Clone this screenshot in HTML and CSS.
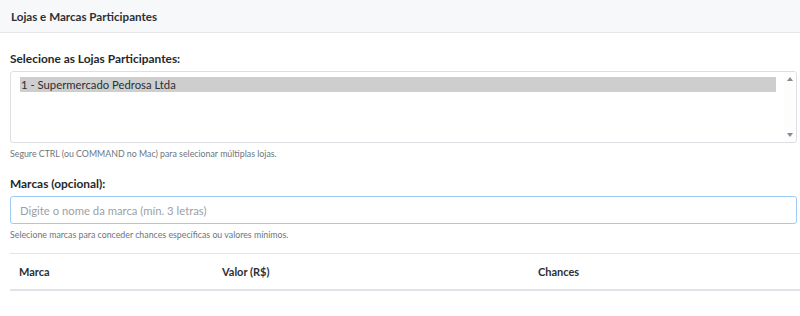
FILE: index.html
```html
<!DOCTYPE html>
<html lang="pt-BR">
<head>
<meta charset="utf-8">
<title>Lojas e Marcas Participantes</title>
<link rel="stylesheet" href="styles.css">
</head>
<body>
<div class="card">
  <div class="card-header">Lojas e Marcas Participantes</div>
  <div class="card-body">
    <label class="label">Selecione as Lojas Participantes:</label>
    <div class="select">
      <div class="options">
        <div class="option selected">1 - Supermercado Pedrosa Ltda</div>
      </div>
      <div class="scrollbar">
        <span class="arrow up"></span>
        <span class="arrow down"></span>
      </div>
    </div>
    <div class="help">Segure CTRL (ou COMMAND no Mac) para selecionar múltiplas lojas.</div>

    <label class="label label-2">Marcas (opcional):</label>
    <input class="input" type="text" placeholder="Digite o nome da marca (mín. 3 letras)">
    <div class="help">Selecione marcas para conceder chances específicas ou valores mínimos.</div>

    <table class="table">
      <thead>
        <tr>
          <th class="c1">Marca</th>
          <th class="c2">Valor (R$)</th>
          <th class="c3">Chances</th>
        </tr>
      </thead>
    </table>
  </div>
</div>
</body>
</html>
```
FILE: styles.css
```css
* { box-sizing: border-box; }
html, body { margin: 0; padding: 0; background: #fff; }
body {
  font-family: "Lato", "Liberation Sans", sans-serif;
  color: #212529;
  width: 800px;
}
.card-header {
  height: 33px;
  background: #f7f8fa;
  border-bottom: 1px solid #e4e6e9;
  padding-left: 11px;
  display: flex;
  align-items: center;
  font-size: 11.6px;
  font-weight: 700;
  color: #2c3035;
}
.card-body {
  padding: 18px 3px 0 10px;
}
.label {
  display: block;
  font-size: 11.9px;
  font-weight: 700;
  line-height: 16px;
  color: #24282c;
  margin-bottom: 4px;
}
.label-2 { margin-top: 16px; }
.select {
  height: 72px;
  border: 1px solid #dcdfe3;
  border-radius: 3px;
  display: flex;
}
.options {
  flex: 1;
  padding: 5px 8px 0 9px;
}
.option {
  font-size: 11.3px;
  line-height: 15px;
  height: 15px;
  padding-left: 1px;
  color: #2b2f33;
}
.option.selected { background: #cecece; }
.scrollbar {
  width: 11px;
  margin-right: 1px;
  background: #fdfdfd;
  display: flex;
  flex-direction: column;
  justify-content: space-between;
  align-items: center;
  padding: 5px 0 5px;
}
.arrow {
  width: 0; height: 0;
  border-left: 3.5px solid transparent;
  border-right: 3.5px solid transparent;
}
.arrow.up { border-bottom: 4px solid #8a8a8a; }
.arrow.down { border-top: 4px solid #8a8a8a; }
.help {
  font-size: 8.8px;
  line-height: 12px;
  color: #6c757d;
  margin-top: 5px;
}
.help-2 { }
.input {
  display: block;
  width: 100%;
  height: 28px;
  border: 1px solid #9ccbf7;
  border-radius: 3px;
  padding: 0 9px;
  font-family: inherit;
  font-size: 11.3px;
  color: #495057;
  outline: none;
}
.input::placeholder { color: #9aa1a8; }
.table {
  margin-top: 12px;
  width: 790px;
  border-collapse: collapse;
  border-top: 1px solid #e3e5e8;
}
.table th {
  text-align: left;
  font-size: 11px;
  font-weight: 700;
  color: #2c3035;
  height: 36px;
  padding: 0 9px;
  border-bottom: 2px solid #e0e3e7;
}
.c1 { width: 203px; }
.c2 { width: 316px; }
```
